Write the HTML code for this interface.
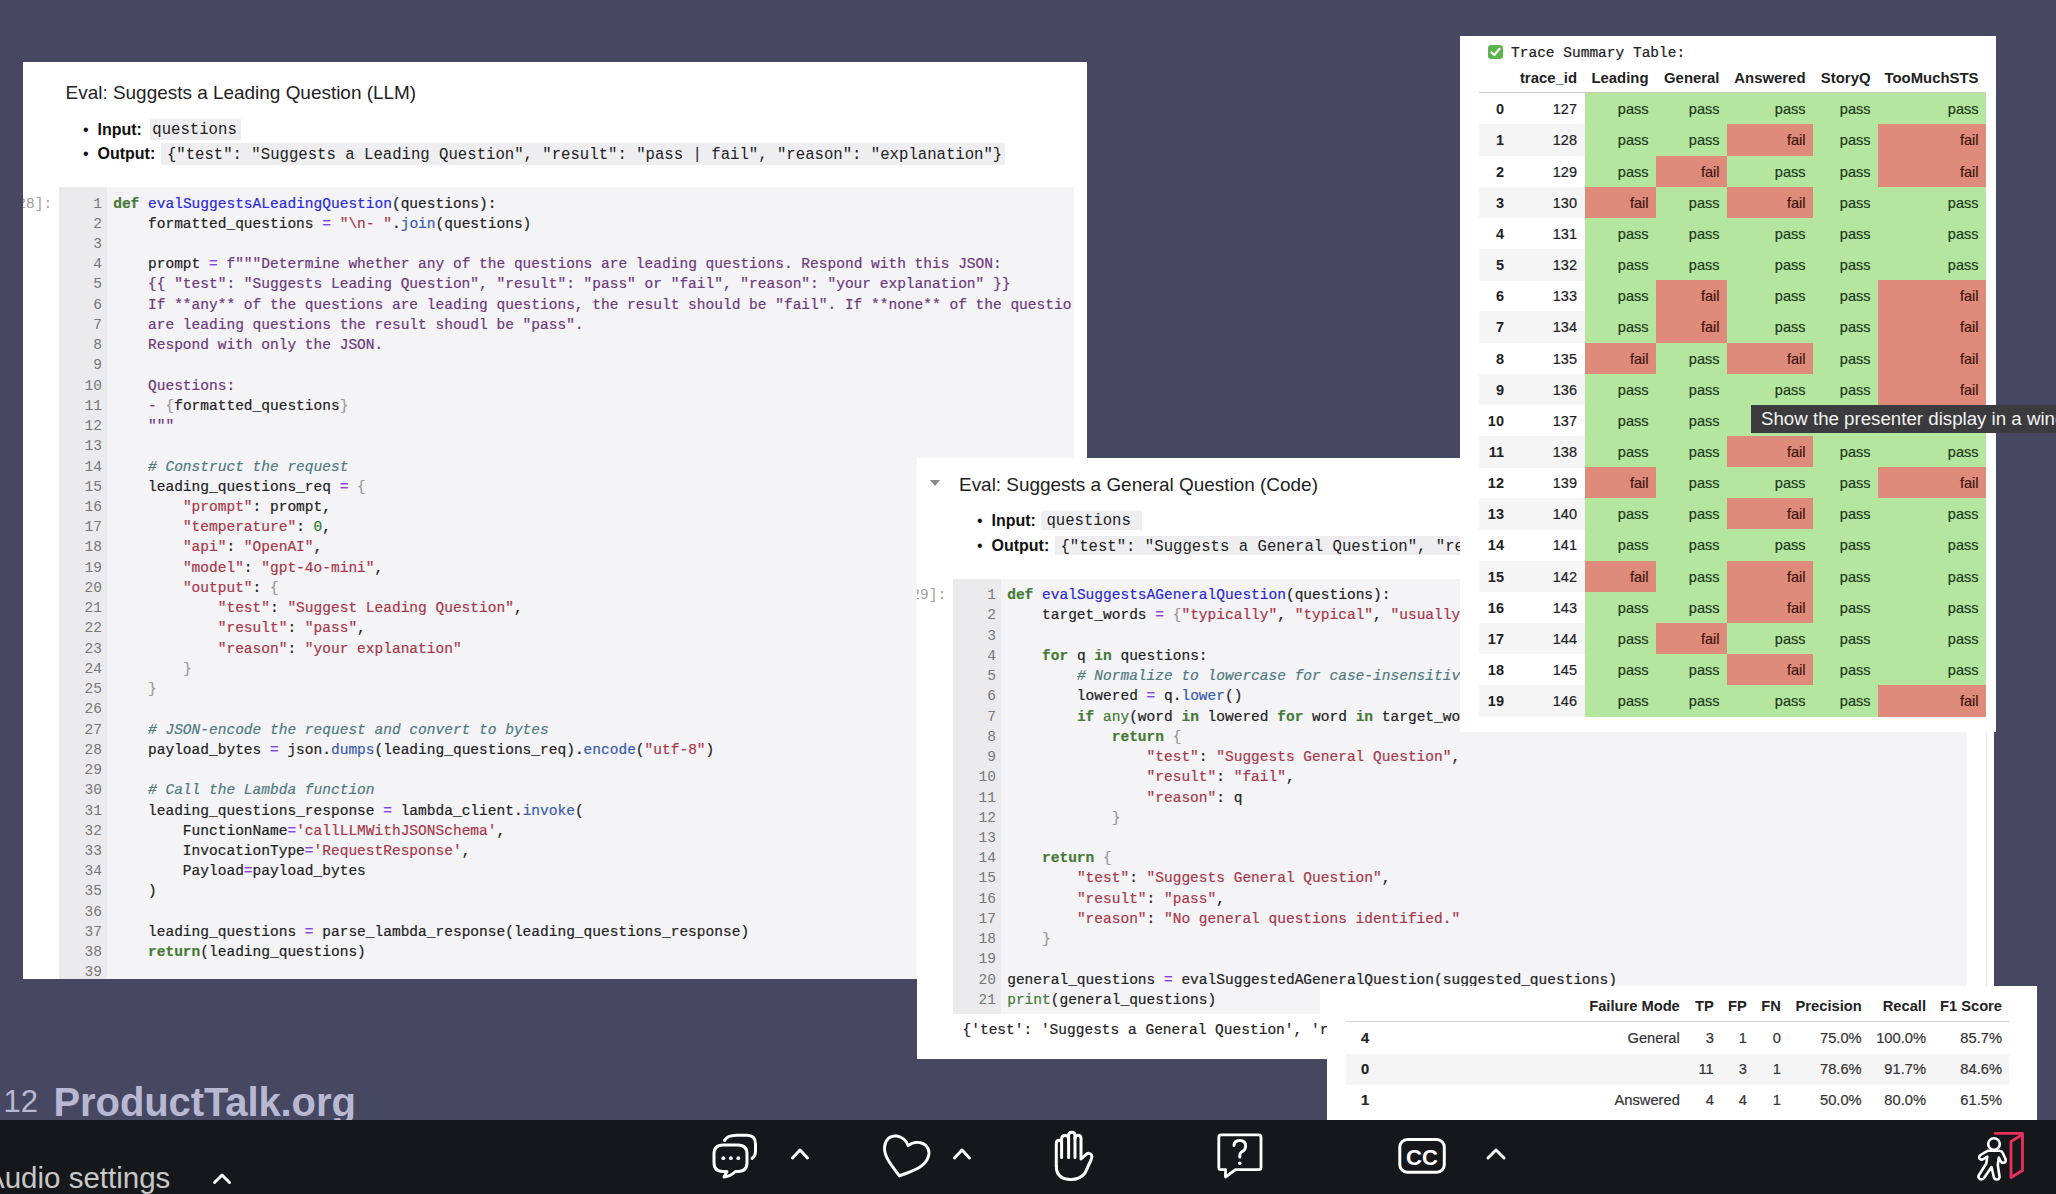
<!DOCTYPE html>
<html><head><meta charset="utf-8">
<style>
*{margin:0;padding:0;box-sizing:border-box}
html,body{width:2056px;height:1194px;overflow:hidden;background:#464761;font-family:"Liberation Sans",sans-serif}
.abs{position:absolute}
.panel{position:absolute;background:#fff;overflow:hidden}
.title{position:absolute;font-size:18.96px;color:#222;white-space:pre;line-height:22px}
.bul{position:absolute;font-size:16px;color:#111;white-space:pre;line-height:20px}
.bul b{font-weight:700}
.ic{position:absolute;background:#eeeef0;font-family:"Liberation Mono",monospace;font-size:15.65px;color:#222;white-space:pre;line-height:24px;padding:0;overflow:visible}
.prompt{position:absolute;font-family:"Liberation Mono",monospace;font-size:14.52px;color:#a0a0a0;white-space:pre;line-height:20.24px}
.cell{position:absolute;background:#f4f3f6;overflow:hidden}
.gut{position:absolute;left:0;top:0;bottom:0;width:48px;background:#ebebee}
.lnum{position:absolute;font-family:"Liberation Mono",monospace;font-size:14.52px;line-height:20.24px;color:#777;text-align:right;white-space:pre}
.code{position:absolute;font-family:"Liberation Mono",monospace;font-size:14.52px;line-height:20.24px;color:#222;white-space:pre;-webkit-text-stroke:0.2px currentColor}
.k{color:#457a36;font-weight:bold}
.f{color:#2a2ad8}
.s{color:#a8384a}
.p{color:#6c3a7c}
.o{color:#8a40e8}
.c{color:#4f7a80;font-style:italic}
.n{color:#2d7a2d}
.br{color:#9a9a9a}
.bi{color:#457a36}
.m{color:#3a5ab0}
.th{position:absolute;font-size:14.9px;font-weight:bold;color:#222;white-space:pre;line-height:20px;text-align:right}
.tix{position:absolute;font-size:14.5px;font-weight:bold;color:#222;line-height:31.15px;height:31.15px;text-align:right;padding-top:1px}
.tcell{position:absolute;font-size:14.5px;color:#222;line-height:31.15px;height:31.15px;text-align:right;padding-top:1px;white-space:pre;-webkit-text-stroke:0.2px currentColor}
.pass{background:#b4e6a0;color:#1d3a1a}
.fail{background:#df8b7b;color:#3d130c}
.mc{position:absolute;font-size:14.7px;color:#333;line-height:31px;height:31px;text-align:right;white-space:pre;-webkit-text-stroke:0.2px currentColor}
.mh{position:absolute;font-size:14.7px;font-weight:bold;color:#222;line-height:20px;text-align:right;white-space:pre}
</style></head><body>

<!-- Panel 1 -->
<div class="panel" style="left:23px;top:62px;width:1064px;height:917px">
  <div class="title" style="left:42.6px;top:19.9px">Eval: Suggests a Leading Question (LLM)</div>
  <div class="bul" style="left:60px;top:57.6px">•  <b>Input:</b></div>
  <div class="ic" style="left:127px;top:57px;height:20.5px;width:91px;padding-left:2.3px;line-height:22.66px">questions</div>
  <div class="bul" style="left:60px;top:82px">•  <b>Output:</b></div>
  <div class="ic" style="left:138px;top:81.3px;height:21.6px;width:844px;padding-left:5.9px;line-height:24.26px">{"test": "Suggests a Leading Question", "result": "pass | fail", "reason": "explanation"}</div>
  <div class="prompt" style="left:-14.4px;top:131.5px">[28]:</div>
  <div class="cell" style="left:36px;top:125px;width:1015px;height:800px">
    <div class="gut"></div>
    <div class="lnum" style="left:0;top:6.5px;width:43px">1
2
3
4
5
6
7
8
9
10
11
12
13
14
15
16
17
18
19
20
21
22
23
24
25
26
27
28
29
30
31
32
33
34
35
36
37
38
39</div>
    <div class="code" style="left:54.2px;top:6.5px;width:957.5px;overflow:hidden"><span class="k">def</span> <span class="f">evalSuggestsALeadingQuestion</span>(questions):
    formatted_questions <span class="o">=</span> <span class="s">"\n- "</span>.<span class="m">join</span>(questions)

    prompt <span class="o">=</span> <span class="p">f"""Determine whether any of the questions are leading questions. Respond with this JSON:</span>
<span class="p">    {{ "test": "Suggests Leading Question", "result": "pass" or "fail", "reason": "your explanation" }}</span>
<span class="p">    If **any** of the questions are leading questions, the result should be "fail". If **none** of the questions</span>
<span class="p">    are leading questions the result shoudl be "pass".</span>
<span class="p">    Respond with only the JSON.</span>

<span class="p">    Questions:</span>
<span class="p">    - </span><span class="br">{</span>formatted_questions<span class="br">}</span>
<span class="p">    """</span>

    <span class="c"># Construct the request</span>
    leading_questions_req <span class="o">=</span> <span class="br">{</span>
        <span class="s">"prompt"</span>: prompt,
        <span class="s">"temperature"</span>: <span class="n">0</span>,
        <span class="s">"api"</span>: <span class="s">"OpenAI"</span>,
        <span class="s">"model"</span>: <span class="s">"gpt-4o-mini"</span>,
        <span class="s">"output"</span>: <span class="br">{</span>
            <span class="s">"test"</span>: <span class="s">"Suggest Leading Question"</span>,
            <span class="s">"result"</span>: <span class="s">"pass"</span>,
            <span class="s">"reason"</span>: <span class="s">"your explanation"</span>
        <span class="br">}</span>
    <span class="br">}</span>

    <span class="c"># JSON-encode the request and convert to bytes</span>
    payload_bytes <span class="o">=</span> json.<span class="m">dumps</span>(leading_questions_req).<span class="m">encode</span>(<span class="s">"utf-8"</span>)

    <span class="c"># Call the Lambda function</span>
    leading_questions_response <span class="o">=</span> lambda_client.<span class="m">invoke</span>(
        FunctionName<span class="o">=</span><span class="s">'callLLMWithJSONSchema'</span>,
        InvocationType<span class="o">=</span><span class="s">'RequestResponse'</span>,
        Payload<span class="o">=</span>payload_bytes
    )

    leading_questions <span class="o">=</span> parse_lambda_response(leading_questions_response)
    <span class="k">return</span>(leading_questions)
</div>
  </div>
</div>

<!-- Panel 2 -->
<div class="panel" style="left:917px;top:458px;width:1077px;height:601px">
  <div class="abs" style="left:1069px;top:120px;width:1px;height:480px;background:#ececef"></div>
  <div class="abs" style="left:13px;top:22px;width:0;height:0;border-left:5px solid transparent;border-right:5px solid transparent;border-top:6px solid #8a8a8a"></div>
  <div class="title" style="left:42px;top:15.8px">Eval: Suggests a General Question (Code)</div>
  <div class="bul" style="left:60px;top:52.5px">•  <b>Input:</b></div>
  <div class="ic" style="left:123.5px;top:53px;height:19.3px;width:101.5px;padding-left:5.9px;line-height:21px">questions</div>
  <div class="bul" style="left:60px;top:77.5px">•  <b>Output:</b></div>
  <div class="ic" style="left:137.5px;top:77.6px;height:19.3px;width:900px;padding-left:5.9px;line-height:22px">{"test": "Suggests a General Question", "result": "pass | fail", "reason": "explanation"}</div>
  <div class="prompt" style="left:-14.4px;top:127px">[29]:</div>
  <div class="cell" style="left:36px;top:120.7px;width:1014px;height:435.3px">
    <div class="gut"></div>
    <div class="lnum" style="left:0;top:6.5px;width:43px">1
2
3
4
5
6
7
8
9
10
11
12
13
14
15
16
17
18
19
20
21</div>
    <div class="code" style="left:54.2px;top:6.5px"><span class="k">def</span> <span class="f">evalSuggestsAGeneralQuestion</span>(questions):
    target_words <span class="o">=</span> <span class="br">{</span><span class="s">"typically"</span>, <span class="s">"typical"</span>, <span class="s">"usually"</span>, <span class="s">"generally"</span>, <span class="s">"often"</span><span class="br">}</span>

    <span class="k">for</span> q <span class="k">in</span> questions:
        <span class="c"># Normalize to lowercase for case-insensitive matching</span>
        lowered <span class="o">=</span> q.<span class="m">lower</span>()
        <span class="k">if</span> <span class="bi">any</span>(word <span class="k">in</span> lowered <span class="k">for</span> word <span class="k">in</span> target_words):
            <span class="k">return</span> <span class="br">{</span>
                <span class="s">"test"</span>: <span class="s">"Suggests General Question"</span>,
                <span class="s">"result"</span>: <span class="s">"fail"</span>,
                <span class="s">"reason"</span>: q
            <span class="br">}</span>

    <span class="k">return</span> <span class="br">{</span>
        <span class="s">"test"</span>: <span class="s">"Suggests General Question"</span>,
        <span class="s">"result"</span>: <span class="s">"pass"</span>,
        <span class="s">"reason"</span>: <span class="s">"No general questions identified."</span>
    <span class="br">}</span>

general_questions <span class="o">=</span> evalSuggestedAGeneralQuestion(suggested_questions)
<span class="bi">print</span>(general_questions)</div>
  </div>
  <div class="code" style="left:45.5px;top:562px;color:#222">{'test': 'Suggests a General Question', 'result': 'pass', 'reason': 'No general questions identified.'}</div>
</div>

<!-- Trace panel -->
<div class="panel" style="left:1460px;top:36px;width:536px;height:696px">
  <div class="abs" style="left:28px;top:9px;width:15px;height:14px;background:#5bb54a;border-radius:3px">
    <svg width="15" height="14" viewBox="0 0 15 14" style="position:absolute;left:0;top:0"><path d="M3.5 7.2 L6.3 10 L11.5 3.8" fill="none" stroke="#fff" stroke-width="2.2" stroke-linecap="round" stroke-linejoin="round"/></svg>
  </div>
  <div class="code" style="left:51px;top:7.4px">Trace Summary Table:</div>
  <div class="th" style="left:0;top:32px;width:117px">trace_id</div>
  <div class="th" style="left:125px;top:32px;width:63.5px">Leading</div>
  <div class="th" style="left:196px;top:32px;width:63.5px">General</div>
  <div class="th" style="left:267px;top:32px;width:78.5px">Answered</div>
  <div class="th" style="left:353px;top:32px;width:57.5px">StoryQ</div>
  <div class="th" style="left:418px;top:32px;width:100.5px">TooMuchSTS</div>
  <div class="abs" style="left:19px;top:55.5px;width:507px;height:1.5px;background:#c8c8c8"></div>
<div class="tix" style="left:19px;top:57.30px;width:25px">0</div>
<div class="tcell" style="left:44px;top:57.30px;width:73px">127</div>
<div class="tcell pass" style="left:125px;top:57.30px;width:71px;height:31.6px;padding-right:7.5px">pass</div>
<div class="tcell pass" style="left:196px;top:57.30px;width:71px;height:31.6px;padding-right:7.5px">pass</div>
<div class="tcell pass" style="left:267px;top:57.30px;width:86px;height:31.6px;padding-right:7.5px">pass</div>
<div class="tcell pass" style="left:353px;top:57.30px;width:65px;height:31.6px;padding-right:7.5px">pass</div>
<div class="tcell pass" style="left:418px;top:57.30px;width:108px;height:31.6px;padding-right:7.5px">pass</div>
<div class="abs" style="left:19px;top:88.45px;width:106px;height:31.6px;background:#f5f5f6"></div>
<div class="tix" style="left:19px;top:88.45px;width:25px">1</div>
<div class="tcell" style="left:44px;top:88.45px;width:73px">128</div>
<div class="tcell pass" style="left:125px;top:88.45px;width:71px;height:31.6px;padding-right:7.5px">pass</div>
<div class="tcell pass" style="left:196px;top:88.45px;width:71px;height:31.6px;padding-right:7.5px">pass</div>
<div class="tcell fail" style="left:267px;top:88.45px;width:86px;height:31.6px;padding-right:7.5px">fail</div>
<div class="tcell pass" style="left:353px;top:88.45px;width:65px;height:31.6px;padding-right:7.5px">pass</div>
<div class="tcell fail" style="left:418px;top:88.45px;width:108px;height:31.6px;padding-right:7.5px">fail</div>
<div class="tix" style="left:19px;top:119.60px;width:25px">2</div>
<div class="tcell" style="left:44px;top:119.60px;width:73px">129</div>
<div class="tcell pass" style="left:125px;top:119.60px;width:71px;height:31.6px;padding-right:7.5px">pass</div>
<div class="tcell fail" style="left:196px;top:119.60px;width:71px;height:31.6px;padding-right:7.5px">fail</div>
<div class="tcell pass" style="left:267px;top:119.60px;width:86px;height:31.6px;padding-right:7.5px">pass</div>
<div class="tcell pass" style="left:353px;top:119.60px;width:65px;height:31.6px;padding-right:7.5px">pass</div>
<div class="tcell fail" style="left:418px;top:119.60px;width:108px;height:31.6px;padding-right:7.5px">fail</div>
<div class="abs" style="left:19px;top:150.75px;width:106px;height:31.6px;background:#f5f5f6"></div>
<div class="tix" style="left:19px;top:150.75px;width:25px">3</div>
<div class="tcell" style="left:44px;top:150.75px;width:73px">130</div>
<div class="tcell fail" style="left:125px;top:150.75px;width:71px;height:31.6px;padding-right:7.5px">fail</div>
<div class="tcell pass" style="left:196px;top:150.75px;width:71px;height:31.6px;padding-right:7.5px">pass</div>
<div class="tcell fail" style="left:267px;top:150.75px;width:86px;height:31.6px;padding-right:7.5px">fail</div>
<div class="tcell pass" style="left:353px;top:150.75px;width:65px;height:31.6px;padding-right:7.5px">pass</div>
<div class="tcell pass" style="left:418px;top:150.75px;width:108px;height:31.6px;padding-right:7.5px">pass</div>
<div class="tix" style="left:19px;top:181.90px;width:25px">4</div>
<div class="tcell" style="left:44px;top:181.90px;width:73px">131</div>
<div class="tcell pass" style="left:125px;top:181.90px;width:71px;height:31.6px;padding-right:7.5px">pass</div>
<div class="tcell pass" style="left:196px;top:181.90px;width:71px;height:31.6px;padding-right:7.5px">pass</div>
<div class="tcell pass" style="left:267px;top:181.90px;width:86px;height:31.6px;padding-right:7.5px">pass</div>
<div class="tcell pass" style="left:353px;top:181.90px;width:65px;height:31.6px;padding-right:7.5px">pass</div>
<div class="tcell pass" style="left:418px;top:181.90px;width:108px;height:31.6px;padding-right:7.5px">pass</div>
<div class="abs" style="left:19px;top:213.05px;width:106px;height:31.6px;background:#f5f5f6"></div>
<div class="tix" style="left:19px;top:213.05px;width:25px">5</div>
<div class="tcell" style="left:44px;top:213.05px;width:73px">132</div>
<div class="tcell pass" style="left:125px;top:213.05px;width:71px;height:31.6px;padding-right:7.5px">pass</div>
<div class="tcell pass" style="left:196px;top:213.05px;width:71px;height:31.6px;padding-right:7.5px">pass</div>
<div class="tcell pass" style="left:267px;top:213.05px;width:86px;height:31.6px;padding-right:7.5px">pass</div>
<div class="tcell pass" style="left:353px;top:213.05px;width:65px;height:31.6px;padding-right:7.5px">pass</div>
<div class="tcell pass" style="left:418px;top:213.05px;width:108px;height:31.6px;padding-right:7.5px">pass</div>
<div class="tix" style="left:19px;top:244.20px;width:25px">6</div>
<div class="tcell" style="left:44px;top:244.20px;width:73px">133</div>
<div class="tcell pass" style="left:125px;top:244.20px;width:71px;height:31.6px;padding-right:7.5px">pass</div>
<div class="tcell fail" style="left:196px;top:244.20px;width:71px;height:31.6px;padding-right:7.5px">fail</div>
<div class="tcell pass" style="left:267px;top:244.20px;width:86px;height:31.6px;padding-right:7.5px">pass</div>
<div class="tcell pass" style="left:353px;top:244.20px;width:65px;height:31.6px;padding-right:7.5px">pass</div>
<div class="tcell fail" style="left:418px;top:244.20px;width:108px;height:31.6px;padding-right:7.5px">fail</div>
<div class="abs" style="left:19px;top:275.35px;width:106px;height:31.6px;background:#f5f5f6"></div>
<div class="tix" style="left:19px;top:275.35px;width:25px">7</div>
<div class="tcell" style="left:44px;top:275.35px;width:73px">134</div>
<div class="tcell pass" style="left:125px;top:275.35px;width:71px;height:31.6px;padding-right:7.5px">pass</div>
<div class="tcell fail" style="left:196px;top:275.35px;width:71px;height:31.6px;padding-right:7.5px">fail</div>
<div class="tcell pass" style="left:267px;top:275.35px;width:86px;height:31.6px;padding-right:7.5px">pass</div>
<div class="tcell pass" style="left:353px;top:275.35px;width:65px;height:31.6px;padding-right:7.5px">pass</div>
<div class="tcell fail" style="left:418px;top:275.35px;width:108px;height:31.6px;padding-right:7.5px">fail</div>
<div class="tix" style="left:19px;top:306.50px;width:25px">8</div>
<div class="tcell" style="left:44px;top:306.50px;width:73px">135</div>
<div class="tcell fail" style="left:125px;top:306.50px;width:71px;height:31.6px;padding-right:7.5px">fail</div>
<div class="tcell pass" style="left:196px;top:306.50px;width:71px;height:31.6px;padding-right:7.5px">pass</div>
<div class="tcell fail" style="left:267px;top:306.50px;width:86px;height:31.6px;padding-right:7.5px">fail</div>
<div class="tcell pass" style="left:353px;top:306.50px;width:65px;height:31.6px;padding-right:7.5px">pass</div>
<div class="tcell fail" style="left:418px;top:306.50px;width:108px;height:31.6px;padding-right:7.5px">fail</div>
<div class="abs" style="left:19px;top:337.65px;width:106px;height:31.6px;background:#f5f5f6"></div>
<div class="tix" style="left:19px;top:337.65px;width:25px">9</div>
<div class="tcell" style="left:44px;top:337.65px;width:73px">136</div>
<div class="tcell pass" style="left:125px;top:337.65px;width:71px;height:31.6px;padding-right:7.5px">pass</div>
<div class="tcell pass" style="left:196px;top:337.65px;width:71px;height:31.6px;padding-right:7.5px">pass</div>
<div class="tcell pass" style="left:267px;top:337.65px;width:86px;height:31.6px;padding-right:7.5px">pass</div>
<div class="tcell pass" style="left:353px;top:337.65px;width:65px;height:31.6px;padding-right:7.5px">pass</div>
<div class="tcell fail" style="left:418px;top:337.65px;width:108px;height:31.6px;padding-right:7.5px">fail</div>
<div class="tix" style="left:19px;top:368.80px;width:25px">10</div>
<div class="tcell" style="left:44px;top:368.80px;width:73px">137</div>
<div class="tcell pass" style="left:125px;top:368.80px;width:71px;height:31.6px;padding-right:7.5px">pass</div>
<div class="tcell pass" style="left:196px;top:368.80px;width:71px;height:31.6px;padding-right:7.5px">pass</div>
<div class="tcell pass" style="left:267px;top:368.80px;width:86px;height:31.6px;padding-right:7.5px">pass</div>
<div class="tcell pass" style="left:353px;top:368.80px;width:65px;height:31.6px;padding-right:7.5px">pass</div>
<div class="tcell pass" style="left:418px;top:368.80px;width:108px;height:31.6px;padding-right:7.5px">pass</div>
<div class="abs" style="left:19px;top:399.95px;width:106px;height:31.6px;background:#f5f5f6"></div>
<div class="tix" style="left:19px;top:399.95px;width:25px">11</div>
<div class="tcell" style="left:44px;top:399.95px;width:73px">138</div>
<div class="tcell pass" style="left:125px;top:399.95px;width:71px;height:31.6px;padding-right:7.5px">pass</div>
<div class="tcell pass" style="left:196px;top:399.95px;width:71px;height:31.6px;padding-right:7.5px">pass</div>
<div class="tcell fail" style="left:267px;top:399.95px;width:86px;height:31.6px;padding-right:7.5px">fail</div>
<div class="tcell pass" style="left:353px;top:399.95px;width:65px;height:31.6px;padding-right:7.5px">pass</div>
<div class="tcell pass" style="left:418px;top:399.95px;width:108px;height:31.6px;padding-right:7.5px">pass</div>
<div class="tix" style="left:19px;top:431.10px;width:25px">12</div>
<div class="tcell" style="left:44px;top:431.10px;width:73px">139</div>
<div class="tcell fail" style="left:125px;top:431.10px;width:71px;height:31.6px;padding-right:7.5px">fail</div>
<div class="tcell pass" style="left:196px;top:431.10px;width:71px;height:31.6px;padding-right:7.5px">pass</div>
<div class="tcell pass" style="left:267px;top:431.10px;width:86px;height:31.6px;padding-right:7.5px">pass</div>
<div class="tcell pass" style="left:353px;top:431.10px;width:65px;height:31.6px;padding-right:7.5px">pass</div>
<div class="tcell fail" style="left:418px;top:431.10px;width:108px;height:31.6px;padding-right:7.5px">fail</div>
<div class="abs" style="left:19px;top:462.25px;width:106px;height:31.6px;background:#f5f5f6"></div>
<div class="tix" style="left:19px;top:462.25px;width:25px">13</div>
<div class="tcell" style="left:44px;top:462.25px;width:73px">140</div>
<div class="tcell pass" style="left:125px;top:462.25px;width:71px;height:31.6px;padding-right:7.5px">pass</div>
<div class="tcell pass" style="left:196px;top:462.25px;width:71px;height:31.6px;padding-right:7.5px">pass</div>
<div class="tcell fail" style="left:267px;top:462.25px;width:86px;height:31.6px;padding-right:7.5px">fail</div>
<div class="tcell pass" style="left:353px;top:462.25px;width:65px;height:31.6px;padding-right:7.5px">pass</div>
<div class="tcell pass" style="left:418px;top:462.25px;width:108px;height:31.6px;padding-right:7.5px">pass</div>
<div class="tix" style="left:19px;top:493.40px;width:25px">14</div>
<div class="tcell" style="left:44px;top:493.40px;width:73px">141</div>
<div class="tcell pass" style="left:125px;top:493.40px;width:71px;height:31.6px;padding-right:7.5px">pass</div>
<div class="tcell pass" style="left:196px;top:493.40px;width:71px;height:31.6px;padding-right:7.5px">pass</div>
<div class="tcell pass" style="left:267px;top:493.40px;width:86px;height:31.6px;padding-right:7.5px">pass</div>
<div class="tcell pass" style="left:353px;top:493.40px;width:65px;height:31.6px;padding-right:7.5px">pass</div>
<div class="tcell pass" style="left:418px;top:493.40px;width:108px;height:31.6px;padding-right:7.5px">pass</div>
<div class="abs" style="left:19px;top:524.55px;width:106px;height:31.6px;background:#f5f5f6"></div>
<div class="tix" style="left:19px;top:524.55px;width:25px">15</div>
<div class="tcell" style="left:44px;top:524.55px;width:73px">142</div>
<div class="tcell fail" style="left:125px;top:524.55px;width:71px;height:31.6px;padding-right:7.5px">fail</div>
<div class="tcell pass" style="left:196px;top:524.55px;width:71px;height:31.6px;padding-right:7.5px">pass</div>
<div class="tcell fail" style="left:267px;top:524.55px;width:86px;height:31.6px;padding-right:7.5px">fail</div>
<div class="tcell pass" style="left:353px;top:524.55px;width:65px;height:31.6px;padding-right:7.5px">pass</div>
<div class="tcell pass" style="left:418px;top:524.55px;width:108px;height:31.6px;padding-right:7.5px">pass</div>
<div class="tix" style="left:19px;top:555.70px;width:25px">16</div>
<div class="tcell" style="left:44px;top:555.70px;width:73px">143</div>
<div class="tcell pass" style="left:125px;top:555.70px;width:71px;height:31.6px;padding-right:7.5px">pass</div>
<div class="tcell pass" style="left:196px;top:555.70px;width:71px;height:31.6px;padding-right:7.5px">pass</div>
<div class="tcell fail" style="left:267px;top:555.70px;width:86px;height:31.6px;padding-right:7.5px">fail</div>
<div class="tcell pass" style="left:353px;top:555.70px;width:65px;height:31.6px;padding-right:7.5px">pass</div>
<div class="tcell pass" style="left:418px;top:555.70px;width:108px;height:31.6px;padding-right:7.5px">pass</div>
<div class="abs" style="left:19px;top:586.85px;width:106px;height:31.6px;background:#f5f5f6"></div>
<div class="tix" style="left:19px;top:586.85px;width:25px">17</div>
<div class="tcell" style="left:44px;top:586.85px;width:73px">144</div>
<div class="tcell pass" style="left:125px;top:586.85px;width:71px;height:31.6px;padding-right:7.5px">pass</div>
<div class="tcell fail" style="left:196px;top:586.85px;width:71px;height:31.6px;padding-right:7.5px">fail</div>
<div class="tcell pass" style="left:267px;top:586.85px;width:86px;height:31.6px;padding-right:7.5px">pass</div>
<div class="tcell pass" style="left:353px;top:586.85px;width:65px;height:31.6px;padding-right:7.5px">pass</div>
<div class="tcell pass" style="left:418px;top:586.85px;width:108px;height:31.6px;padding-right:7.5px">pass</div>
<div class="tix" style="left:19px;top:618.00px;width:25px">18</div>
<div class="tcell" style="left:44px;top:618.00px;width:73px">145</div>
<div class="tcell pass" style="left:125px;top:618.00px;width:71px;height:31.6px;padding-right:7.5px">pass</div>
<div class="tcell pass" style="left:196px;top:618.00px;width:71px;height:31.6px;padding-right:7.5px">pass</div>
<div class="tcell fail" style="left:267px;top:618.00px;width:86px;height:31.6px;padding-right:7.5px">fail</div>
<div class="tcell pass" style="left:353px;top:618.00px;width:65px;height:31.6px;padding-right:7.5px">pass</div>
<div class="tcell pass" style="left:418px;top:618.00px;width:108px;height:31.6px;padding-right:7.5px">pass</div>
<div class="abs" style="left:19px;top:649.15px;width:106px;height:31.6px;background:#f5f5f6"></div>
<div class="tix" style="left:19px;top:649.15px;width:25px">19</div>
<div class="tcell" style="left:44px;top:649.15px;width:73px">146</div>
<div class="tcell pass" style="left:125px;top:649.15px;width:71px;height:31.6px;padding-right:7.5px">pass</div>
<div class="tcell pass" style="left:196px;top:649.15px;width:71px;height:31.6px;padding-right:7.5px">pass</div>
<div class="tcell pass" style="left:267px;top:649.15px;width:86px;height:31.6px;padding-right:7.5px">pass</div>
<div class="tcell pass" style="left:353px;top:649.15px;width:65px;height:31.6px;padding-right:7.5px">pass</div>
<div class="tcell fail" style="left:418px;top:649.15px;width:108px;height:31.6px;padding-right:7.5px">fail</div>
</div>

<!-- Metrics panel -->
<div class="abs" style="left:1320px;top:986px;width:8px;height:28px;background:#fff"></div>
<div class="panel" style="left:1327px;top:986px;width:710px;height:134px">
<div class="abs" style="left:0;top:2.5px;width:710px;height:140px">
  <div class="mh" style="left:0;top:7px;width:352.8px">Failure Mode</div>
  <div class="mh" style="left:0;top:7px;width:386.8px">TP</div>
  <div class="mh" style="left:0;top:7px;width:419.8px">FP</div>
  <div class="mh" style="left:0;top:7px;width:453.8px">FN</div>
  <div class="mh" style="left:0;top:7px;width:534.7px">Precision</div>
  <div class="mh" style="left:0;top:7px;width:599px">Recall</div>
  <div class="mh" style="left:0;top:7px;width:675px">F1 Score</div>
  <div class="abs" style="left:19px;top:32px;width:663px;height:1.5px;background:#d0d0d0"></div>
  <div class="abs" style="left:19px;top:65px;width:663px;height:31px;background:#f5f5f6"></div>
  <!-- row 0 -->
  <div class="mc" style="left:34px;top:34px;text-align:left;font-weight:bold;color:#222">4</div>
  <div class="mc" style="left:0;top:34px;width:352.8px">General</div>
  <div class="mc" style="left:0;top:34px;width:386.8px">3</div>
  <div class="mc" style="left:0;top:34px;width:419.8px">1</div>
  <div class="mc" style="left:0;top:34px;width:453.8px">0</div>
  <div class="mc" style="left:0;top:34px;width:534.7px">75.0%</div>
  <div class="mc" style="left:0;top:34px;width:599px">100.0%</div>
  <div class="mc" style="left:0;top:34px;width:675px">85.7%</div>
  <!-- row 1 -->
  <div class="mc" style="left:34px;top:65px;text-align:left;font-weight:bold;color:#222">0</div>
  <div class="mc" style="left:0;top:65px;width:386.8px">11</div>
  <div class="mc" style="left:0;top:65px;width:419.8px">3</div>
  <div class="mc" style="left:0;top:65px;width:453.8px">1</div>
  <div class="mc" style="left:0;top:65px;width:534.7px">78.6%</div>
  <div class="mc" style="left:0;top:65px;width:599px">91.7%</div>
  <div class="mc" style="left:0;top:65px;width:675px">84.6%</div>
  <!-- row 2 -->
  <div class="mc" style="left:34px;top:96px;text-align:left;font-weight:bold;color:#222">1</div>
  <div class="mc" style="left:0;top:96px;width:352.8px">Answered</div>
  <div class="mc" style="left:0;top:96px;width:386.8px">4</div>
  <div class="mc" style="left:0;top:96px;width:419.8px">4</div>
  <div class="mc" style="left:0;top:96px;width:453.8px">1</div>
  <div class="mc" style="left:0;top:96px;width:534.7px">50.0%</div>
  <div class="mc" style="left:0;top:96px;width:599px">80.0%</div>
  <div class="mc" style="left:0;top:96px;width:675px">61.5%</div>
</div>
</div>

<!-- Tooltip -->
<div class="abs" style="left:1751px;top:405px;width:320px;height:28px;background:#3b3b3d;overflow:hidden">
  <div class="abs" style="left:10px;top:2px;font-size:18.7px;color:#f2f2f2;white-space:pre;line-height:24px">Show the presenter display in a window</div>
</div>

<!-- Bottom text -->
<div class="abs" style="left:3.5px;top:1084px;font-size:31px;color:#b8b8d3;white-space:pre;line-height:36px">12</div>
<div class="abs" style="left:53.5px;top:1079px;font-size:40px;font-weight:bold;color:#b8b8d3;white-space:pre;line-height:46px;letter-spacing:-0.1px">ProductTalk.org</div>

<!-- Toolbar -->
<div class="abs" style="left:0;top:1120px;width:2056px;height:74px;background:#16171b;overflow:hidden">
  <div class="abs" style="left:-15px;top:41px;font-size:29.5px;color:#c8c8c8;white-space:pre;line-height:34px">Audio settings</div>
  <svg class="abs" style="left:0;top:0" width="2056" height="74" viewBox="0 1120 2056 74">
    <g fill="none" stroke="#fff" stroke-width="3" stroke-linecap="round" stroke-linejoin="round">
      <polyline points="214.5,1182.5 222,1175 229.5,1182.5"/>
      <!-- chat -->
      <path d="M727 1171.5 L724 1177 Q730 1176.5 735.5 1171.5 L738 1171.5 Q747 1171.5 747 1162.5 L747 1154 Q747 1145 738 1145 L723 1145 Q714 1145 714 1154 L714 1162.5 Q714 1171.5 723 1171.5 Z"/>
      <path d="M724.5 1140.5 Q727 1135.3 737 1135.3 L747 1135.3 Q755.5 1135.3 755.5 1144 L755.5 1151 Q755.5 1156 752 1158.5"/>
      <polyline points="792.5,1158 800,1150 807.5,1158"/>
      <!-- heart -->
      <path transform="translate(904.8 1157.2) rotate(16)" d="M0 -12 C-6 -21 -22.5 -21 -22.5 -7 C-22.5 4 -11 11 0 19.5 C11 11 22.5 4 22.5 -7 C22.5 -21 6 -21 0 -12 Z"/>
      <polyline points="954.5,1158 962,1150 969.5,1158"/>
      <!-- hand -->
      <path d="M1056.3 1166 L1056.3 1143.5 Q1056.3 1140.2 1059 1140.2 Q1061.6 1140.2 1061.6 1143.5 L1061.6 1157.4"/>
      <path d="M1061.6 1143.5 L1061.6 1138.8 Q1061.6 1135.6 1065.1 1135.6 Q1068.6 1135.6 1068.6 1138.8 L1068.6 1157.4"/>
      <path d="M1068.6 1138.8 L1068.6 1135.5 Q1068.6 1132.2 1071.8 1132.2 Q1075 1132.2 1075 1135.5 L1075 1157.4"/>
      <path d="M1075 1138.5 Q1075 1135.2 1078 1135.2 Q1081 1135.2 1081 1138.5 L1081 1159 L1086 1154.5 Q1089.5 1152 1091.5 1155 Q1092.5 1157 1091 1160 L1085 1173 Q1080 1179.5 1071 1179.5 Q1056.3 1179.5 1056.3 1166"/>
      <!-- question -->
      <path stroke-width="2.8" d="M1221 1134.8 L1258.8 1134.8 Q1261 1134.8 1261 1137 L1261 1167.5 Q1261 1169.7 1258.8 1169.7 L1235.5 1169.7 L1225.5 1177 L1225.5 1169.7 L1221 1169.7 Q1218.8 1169.7 1218.8 1167.5 L1218.8 1137 Q1218.8 1134.8 1221 1134.8 Z"/>
      <path d="M1234 1145.5 Q1234.2 1140.5 1239.8 1140.5 Q1245.6 1140.5 1245.6 1146 Q1245.6 1150 1241.5 1152 Q1239.8 1153 1239.8 1155.5 L1239.8 1157"/>
      <!-- CC -->
      <rect x="1399.8" y="1139.5" width="44.5" height="32.7" rx="7.5" stroke-width="3"/>
      <polyline points="1488,1158 1496,1150 1504,1158"/>
      <!-- person -->
      <circle cx="1994" cy="1144" r="5.8" stroke-width="2.6"/>
      <path stroke-width="2.6" d="M1987.5 1150.8 L1999.5 1150.8 Q2001.8 1151 2002.8 1153 L2005.5 1159 Q2006.5 1162 2003.8 1162.8 Q2001.5 1163.3 2000.5 1161 L1998.8 1157.5 L1997.8 1165 L1999.5 1176.5 Q1999.8 1179.5 1996.8 1179.5 Q1994.3 1179.5 1993.8 1177 L1991.5 1167 L1984 1178 Q1982 1180.2 1979.6 1178.8 Q1977.6 1177.2 1979 1175 L1986.3 1163.5 L1987.3 1156.5 L1983.5 1159 Q1981 1160.5 1979.5 1158.5 Q1978.5 1156.5 1980.5 1155 Z"/>
    </g>
    <circle cx="723.3" cy="1158.2" r="1.9" fill="#fff"/>
    <circle cx="730.8" cy="1158.2" r="1.9" fill="#fff"/>
    <circle cx="738.3" cy="1158.2" r="1.9" fill="#fff"/>
    <circle cx="1239.8" cy="1163.3" r="1.7" fill="#fff"/>
    <text x="1422" y="1164.5" text-anchor="middle" font-family="Liberation Sans" font-weight="bold" font-size="22" fill="#fff">CC</text>
    <path d="M1995 1133.3 L2022.5 1133.3 L2022.5 1170.5 L2011 1177.5 L2011 1141.5 L2022.5 1134.5" fill="none" stroke="#e8305a" stroke-width="2.8" stroke-linejoin="round" stroke-linecap="round"/>
  </svg>
</div>

</body></html>
